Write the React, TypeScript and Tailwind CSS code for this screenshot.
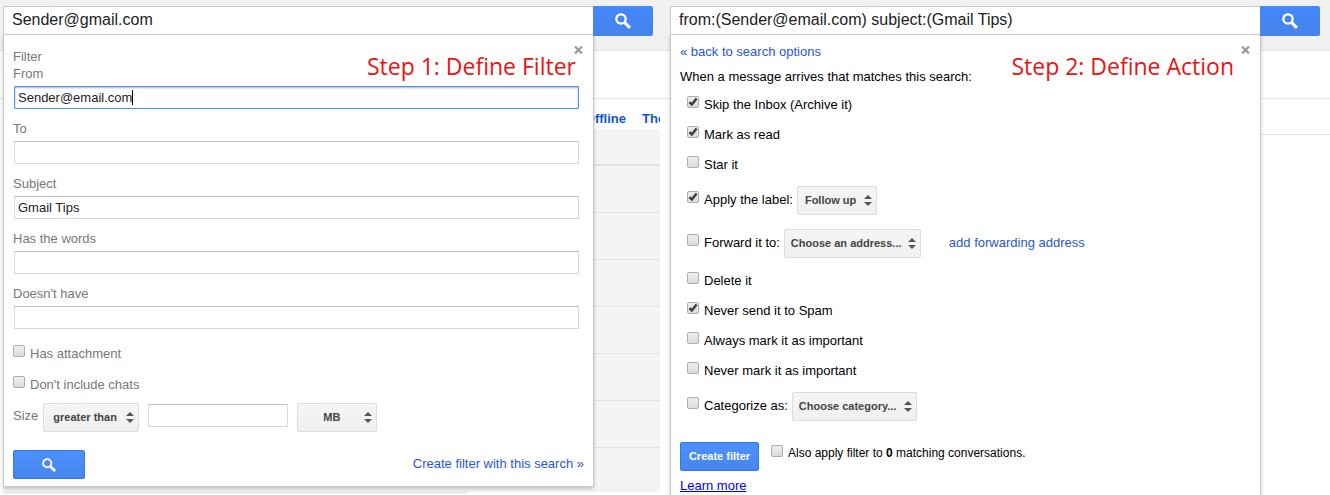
import { useId, useState } from "react";
import type { ReactNode } from "react";

const FONT = "font-['Liberation_Sans',Arial,sans-serif]";

function SearchIcon({ size }: { size: number }) {
  return (
    <svg width={size} height={size} viewBox="0 0 15 15" fill="none" stroke="#fff">
      <circle cx="5.6" cy="5.6" r="4.4" strokeWidth="2.1" />
      <path d="M8.8 8.8L14 14" strokeWidth="2.9" />
    </svg>
  );
}

function CloseButton() {
  return (
    <button aria-label="Close" className="absolute top-[11px] right-[10px]">
      <svg width="9" height="8" viewBox="0 0 9 8" stroke="#999" strokeWidth="2.2">
        <path d="M1 0.5L8 7.5M8 0.5L1 7.5" />
      </svg>
    </button>
  );
}

function StepTitle({ className, children }: { className: string; children: ReactNode }) {
  return (
    <h2
      className={`absolute top-[15px] font-['Open_Sans',sans-serif] text-[23px] leading-8 whitespace-nowrap text-[#e81414] ${className}`}
    >
      {children}
    </h2>
  );
}

function SearchBar({ initial }: { initial: string }) {
  const [query, setQuery] = useState(initial);

  return (
    <form className="relative z-10 flex h-[30px]" onSubmit={(e) => e.preventDefault()}>
      <input
        aria-label="Search mail"
        className="h-[29px] min-w-0 flex-1 border border-r-0 border-[#c8c8c8] bg-white px-2 pb-0.5 text-base text-[#222] outline-none"
        value={query}
        onChange={(e) => setQuery(e.target.value)}
      />
      <button
        aria-label="Search"
        className="flex w-[60px] items-center justify-center rounded-r-xs bg-linear-to-b from-[#4387fd] to-[#4683ea]"
      >
        <SearchIcon size={16} />
      </button>
    </form>
  );
}

function TextField({ label, initial = "", active = false }: { label: string; initial?: string; active?: boolean }) {
  const id = useId();
  const [value, setValue] = useState(initial);

  return (
    <div className="flex flex-col">
      <label htmlFor={id} className="mb-1">
        {label}
      </label>
      <div className="relative mr-[5px] ml-px flex">
        <input
          id={id}
          className={`h-[23px] w-full border px-[3px] text-[13px] text-[#222] outline-none ${
            active
              ? "rounded-[1px] border-[#4d90fe] caret-transparent shadow-[inset_0_1px_2px_rgba(0,0,0,0.3)]"
              : "border-[#d9d9d9] border-t-[#c0c0c0]"
          }`}
          value={value}
          onChange={(e) => setValue(e.target.value)}
        />
        {active && <span className="absolute top-1 left-[118px] h-[15px] w-px bg-black" />}
      </div>
    </div>
  );
}

function CheckBox({ label, initial = false, small = false }: { label: ReactNode; initial?: boolean; small?: boolean }) {
  const [checked, setChecked] = useState(initial);

  return (
    <label className={`flex items-start gap-[5px] whitespace-nowrap ${small ? "text-xs leading-[17px]" : ""}`}>
      <span className="relative flex">
        <input
          type="checkbox"
          className="size-3 appearance-none rounded-xs border border-[#adadad] bg-linear-to-b from-[#eee] to-[#dcdcdc]"
          checked={checked}
          onChange={(e) => setChecked(e.target.checked)}
        />
        {checked && (
          <svg
            className="pointer-events-none absolute inset-0"
            width="12"
            height="12"
            viewBox="0 0 12 12"
            fill="none"
            stroke="#3c3c3c"
            strokeWidth="2.4"
          >
            <path d="M2.4 6.2L4.8 8.4L9.6 2.4" />
          </svg>
        )}
      </span>
      <span className="self-baseline">{label}</span>
    </label>
  );
}

function DropDown({ label, options, className }: { label: string; options: string[]; className: string }) {
  return (
    <span className="relative flex">
      <select
        aria-label={label}
        className={`h-[29px] appearance-none rounded-xs border border-[#dcdcdc] bg-linear-to-b from-[#f5f5f5] to-[#f0f0f0] text-[11px] font-bold text-[#444] ${className}`}
      >
        {options.map((option) => (
          <option key={option}>{option}</option>
        ))}
      </select>
      <svg
        className="pointer-events-none absolute top-[9px] right-[5px]"
        width="8"
        height="11"
        viewBox="0 0 8 11"
        fill="#555"
      >
        <path d="M4 0L8 4H0zM0 7H8L4 11z" />
      </svg>
    </span>
  );
}

// a row of the action list, a bit taller when a drop-down stands beside the tick box
function ActionRow({ children }: { children: ReactNode }) {
  return <li className="flex items-baseline gap-1 pt-[7px] pb-[6px] has-[select]:pb-[7px]">{children}</li>;
}

function MailBackground() {
  return (
    <div className="col-start-1 row-start-1 flex flex-col">
      <div className="h-[51px] border-b border-[#e5e5e5] bg-[#f1f1f1]" />
      <div className="h-12 border-b border-[#e5e5e5]" />
      <div className="flex h-[30px] items-center justify-end gap-4 pt-2 font-bold text-[#15c]">
        <a href="#offline">Offline</a>
        <a href="#themes" className="w-[18px] overflow-hidden">
          The
        </a>
      </div>
      <div className="ml-[3px] bg-[#f4f4f4]">
        <div className="h-[37px] border-b-2 border-[#e2e2e2]" />
        {[1, 2, 3, 4, 5, 6].map((row) => (
          <div key={row} className="h-[47px] border-b border-[#e2e2e2]" />
        ))}
        <div className="h-11" />
      </div>
      <div className="mr-48 ml-[3px] flex-1 border-t border-[#e2e2e2] bg-[#f8f8f8]" />
    </div>
  );
}

function FilterPanel() {
  return (
    <section className="relative mr-[6px] border border-[#c8c8c8] bg-white pt-[13px] pr-[9px] pb-[7px] pl-[9px] text-[#777] shadow-[0_2px_4px_rgba(0,0,0,0.2)]">
      <CloseButton />
      <StepTitle className="right-[17px]">Step 1: Define Filter</StepTitle>
      <p>Filter</p>
      <div className="flex flex-col gap-[11px]">
        <TextField label="From" initial="Sender@email.com" active />
        <TextField label="To" />
        <TextField label="Subject" initial="Gmail Tips" />
        <TextField label="Has the words" />
        <TextField label="Doesn't have" />
      </div>
      <div className="mt-4 flex flex-col gap-[14px]">
        <CheckBox label="Has attachment" />
        <CheckBox label="Don't include chats" />
      </div>
      <div className="mt-[10px] flex">
        <label htmlFor="size" className="mt-1 mr-[5px]">
          Size
        </label>
        <DropDown label="Size comparison" options={["greater than", "less than"]} className="w-24 px-[9px]" />
        <input
          id="size"
          className="mt-px mr-[9px] ml-[9px] h-[23px] w-[140px] border border-[#d9d9d9] border-t-[#c0c0c0] px-1 text-[#222]"
        />
        <DropDown label="Size unit" options={["MB", "KB", "Bytes"]} className="w-20 pl-[25px]" />
      </div>
      <div className="mt-[18px] flex justify-between">
        <button
          aria-label="Search mail"
          className="flex h-[29px] w-[72px] items-center justify-center rounded-xs border border-[#3079ed] bg-linear-to-b from-[#4d90fe] to-[#4787ed]"
        >
          <SearchIcon size={14} />
        </button>
        <a href="#create" className="mt-[5px] text-[#2a56d0]">
          Create filter with this search »
        </a>
      </div>
    </section>
  );
}

function ActionPanel() {
  return (
    <section className="relative flex-1 border border-b-0 border-[#c8c8c8] bg-white pt-2 pr-[9px] pl-[9px] text-black shadow-[0_2px_4px_rgba(0,0,0,0.2)]">
      <CloseButton />
      <StepTitle className="right-[26px]">Step 2: Define Action</StepTitle>
      <a href="#back" className="block w-fit text-[#2a56d0]">
        « back to search options
      </a>
      <p className="mt-2">When a message arrives that matches this search:</p>
      <ul className="mt-1 flex flex-col pl-[7px]">
        <ActionRow>
          <CheckBox label="Skip the Inbox (Archive it)" initial />
        </ActionRow>
        <ActionRow>
          <CheckBox label="Mark as read" initial />
        </ActionRow>
        <ActionRow>
          <CheckBox label="Star it" />
        </ActionRow>
        <ActionRow>
          <CheckBox label="Apply the label:" initial />
          <DropDown label="Label" options={["Follow up"]} className="w-20 pl-[7px]" />
        </ActionRow>
        <ActionRow>
          <CheckBox label="Forward it to:" />
          <DropDown label="Forwarding address" options={["Choose an address..."]} className="w-[137px] pl-[6px]" />
          <a href="#forwarding" className="ml-6 text-[#2a56d0]">
            add forwarding address
          </a>
        </ActionRow>
        <ActionRow>
          <CheckBox label="Delete it" />
        </ActionRow>
        <ActionRow>
          <CheckBox label="Never send it to Spam" initial />
        </ActionRow>
        <ActionRow>
          <CheckBox label="Always mark it as important" />
        </ActionRow>
        <ActionRow>
          <CheckBox label="Never mark it as important" />
        </ActionRow>
        <ActionRow>
          <CheckBox label="Categorize as:" />
          <DropDown label="Category" options={["Choose category..."]} className="w-[125px] pl-[6px]" />
        </ActionRow>
      </ul>
      <div className="mt-[14px] flex gap-3">
        <button className="h-[29px] w-[79px] rounded-xs border border-[#3079ed] bg-linear-to-b from-[#4d90fe] to-[#4787ed] text-[11px] font-bold text-white">
          Create filter
        </button>
        <div className="pt-[3px]">
          <CheckBox
            small
            label={
              <>
                Also apply filter to <b>0</b> matching conversations.
              </>
            }
          />
        </div>
      </div>
      <a href="#learn" className="mt-[6px] block w-fit text-[#00e] underline">
        Learn more
      </a>
    </section>
  );
}

export default function App() {
  return (
    <main
      className={`grid min-h-screen grid-cols-[66fr_67fr] overflow-hidden bg-white text-[13px] leading-[17px] ${FONT}`}
    >
      <div className="grid overflow-hidden">
        <MailBackground />
        <div className="relative col-start-1 row-start-1 mt-[6px] mr-[7px] ml-[3px]">
          <SearchBar initial="Sender@gmail.com" />
          <div className="-mt-0.5 mr-[53px]">
            <FilterPanel />
          </div>
        </div>
      </div>

      <div className="grid overflow-hidden">
        <div className="col-start-1 row-start-1">
          <div className="h-[51px] border-b border-[#e5e5e5] bg-[#f1f1f1]" />
          <div className="h-12 border-b border-[#e5e5e5]" />
          <div className="ml-[600px] h-9 border-b border-[#e5e5e5]" />
        </div>
        <div className="relative col-start-1 row-start-1 mt-[6px] mr-[10px] ml-[10px] flex flex-col">
          <SearchBar initial="from:(Sender@email.com) subject:(Gmail Tips)" />
          <div className="-mt-0.5 mr-[59px] flex flex-1 flex-col">
            <ActionPanel />
          </div>
        </div>
      </div>
    </main>
  );
}
